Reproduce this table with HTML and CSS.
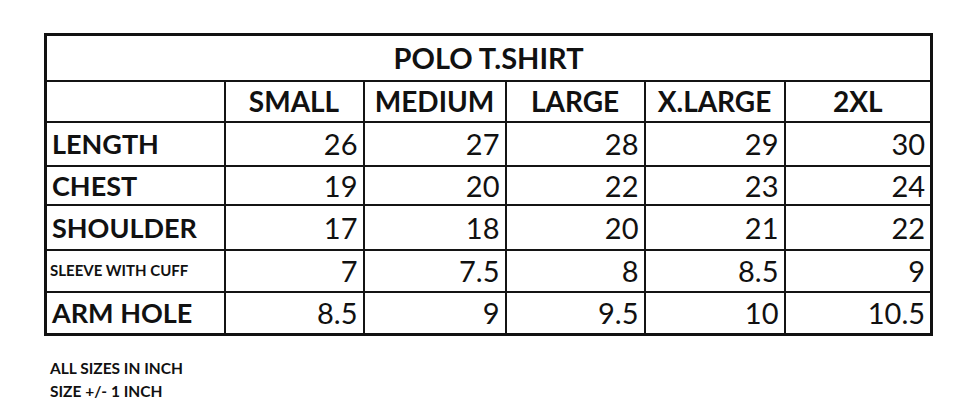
FILE: index.html
```html
<!DOCTYPE html>
<html>
<head>
<meta charset="utf-8">
<link rel="stylesheet" href="styles.css">
</head>
<body>
<div class="sheet">
  <table class="chart">
    <colgroup>
      <col class="c-label"><col class="c-s"><col class="c-m"><col class="c-l"><col class="c-xl"><col class="c-2xl">
    </colgroup>
    <tr class="r-title"><td class="title" colspan="6">POLO T.SHIRT</td></tr>
    <tr class="r-head">
      <td></td><td class="head">SMALL</td><td class="head">MEDIUM</td><td class="head">LARGE</td><td class="head">X.LARGE</td><td class="head">2XL</td>
    </tr>
    <tr class="r-length">
      <td class="label">LENGTH</td><td class="num">26</td><td class="num">27</td><td class="num">28</td><td class="num">29</td><td class="num">30</td>
    </tr>
    <tr class="r-chest">
      <td class="label">CHEST</td><td class="num">19</td><td class="num">20</td><td class="num">22</td><td class="num">23</td><td class="num">24</td>
    </tr>
    <tr class="r-shoulder">
      <td class="label">SHOULDER</td><td class="num">17</td><td class="num">18</td><td class="num">20</td><td class="num">21</td><td class="num">22</td>
    </tr>
    <tr class="r-sleeve">
      <td class="label small">SLEEVE WITH CUFF</td><td class="num">7</td><td class="num">7.5</td><td class="num">8</td><td class="num">8.5</td><td class="num">9</td>
    </tr>
    <tr class="r-arm">
      <td class="label">ARM HOLE</td><td class="num">8.5</td><td class="num">9</td><td class="num">9.5</td><td class="num">10</td><td class="num">10.5</td>
    </tr>
  </table>
  <div class="notes">
    <p>ALL SIZES IN INCH</p>
    <p>SIZE +/- 1 INCH</p>
  </div>
</div>
</body>
</html>
```

FILE: styles.css
```css
html, body {
  margin: 0;
  padding: 0;
  background: #ffffff;
}

body {
  font-family: "Lato", "Open Sans", sans-serif;
  color: #111111;
}

.sheet {
  padding: 33px 0 0 44px;
}

.chart {
  border-collapse: collapse;
  width: 887px;
  table-layout: fixed;
  border: 3px solid #111111;
}

.c-label { width: 179px; }
.c-s { width: 139px; }
.c-m { width: 142px; }
.c-l { width: 139px; }
.c-xl { width: 140px; }
.c-2xl { width: 147px; }

.chart td {
  border: 2px solid #141414;
  padding: 0 5px 0 5px;
  vertical-align: middle;
  line-height: 1;
  white-space: nowrap;
}

.r-title { height: 46px; }
.r-head { height: 41px; }
.r-length { height: 44px; }
.r-chest { height: 39px; }
.r-shoulder { height: 45px; }
.r-sleeve { height: 42px; }
.r-arm { height: 43px; }

.title {
  text-align: center;
  font-weight: 700;
  font-size: 29px;
  padding-top: 5px;
}

.head {
  text-align: center;
  font-weight: 700;
  font-size: 28px;
}

.label {
  font-weight: 700;
  font-size: 27px;
  text-align: left;
  padding-left: 4px;
}

.chart td.label.small {
  font-size: 15px;
  padding-left: 3px;
}

.num {
  text-align: right;
  font-size: 29px;
  font-weight: 400;
}

.notes {
  margin-top: 21px;
  padding-left: 6px;
  font-size: 15.5px;
  font-weight: 700;
}

.notes p {
  margin: 0;
  line-height: 23px;
}
```
